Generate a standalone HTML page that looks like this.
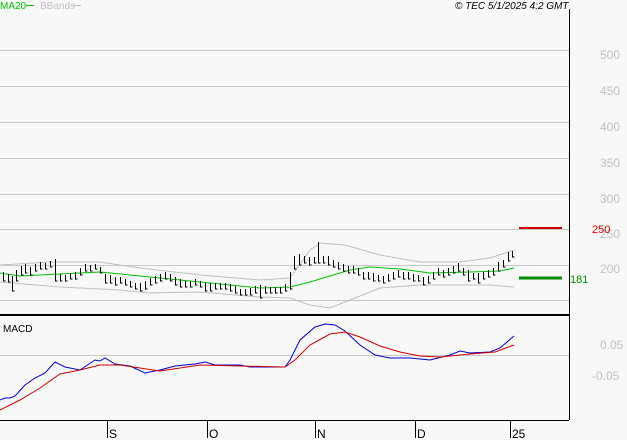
<!DOCTYPE html><html><head><style>body{margin:0;background:#f8f8f8}svg{display:block}text{font-family:"Liberation Sans",sans-serif}</style></head><body>
<svg width="627" height="440" xmlns="http://www.w3.org/2000/svg" shape-rendering="crispEdges">
<rect width="627" height="440" fill="#f8f8f8"/>
<g stroke="#c8c8c8" stroke-width="1">
<path d="M0 50.5H569M0 86.5H569M0 122.5H569M0 158.5H569M0 194.5H569M0 229.5H569M0 265.5H569M0 300.5H569M0 355.5H569"/>
</g>
<g fill="#c0c0c0" font-size="12">
<text x="600" y="59">500</text><text x="600" y="95">450</text><text x="600" y="131">400</text><text x="600" y="167">350</text><text x="600" y="203">300</text><text x="600" y="238">250</text><text x="600" y="273">200</text><text x="600" y="349">0.05</text><text x="592" y="380">-0.05</text>
</g>
<path d="M569.5 9V420M0 420.5H569" stroke="#000" stroke-width="1" fill="none"/>
<path d="M0 315H569" stroke="#000" stroke-width="2"/>
<path d="M107.5 420V438M207.5 420V438M315.5 420V438M415.5 420V438M510.5 420V438" stroke="#000"/>
<g font-size="12" fill="#000"><text x="109" y="438">S</text><text x="209" y="438">O</text><text x="317" y="438">N</text><text x="417" y="438">D</text><text x="512" y="438">25</text></g>
<text x="0" y="9" font-size="10" fill="#00c000">MA20</text><path d="M26 5.5H34" stroke="#00c000"/>
<text x="40" y="9" font-size="10" fill="#c0c0c0">BBands</text><path d="M73 5.5H81" stroke="#c0c0c0"/>
<text x="455" y="9" font-size="10" font-style="italic" fill="#000">© TEC 5/1/2025 4:2 GMT</text>
<text x="3" y="332" font-size="10" fill="#000">MACD</text>
<g shape-rendering="auto">
<polyline fill="none" stroke="#c0c0c0" points="0,265 50,262 100,262 140,268 200,275 260,280 290,278 310,250 320,243 345,245 380,255 420,262 460,262 490,258 514,250"/>
<polyline fill="none" stroke="#c0c0c0" points="0,282 60,287 120,290 150,293 200,292 260,297 290,298 310,305 330,308 350,300 380,288 420,285 460,285 490,285 514,287"/>
<polyline fill="none" stroke="#00c000" points="0,273 20,276 60,274 100,272 140,276 180,280 220,284 260,288 290,287 310,282 330,276 350,270 370,267 400,269 430,273 470,272 500,271 514,268"/>
</g>
<path stroke="#000" fill="none" d="M3.5 272V281h2M8.5 274V282h2M12.5 276V291h2M16.5 270V281h2M21.5 266V275h2M25.5 264V273h2M30.5 267V275h2M35.5 264V271h2M40.5 262V269h2M45.5 263V269h2M50.5 261V267h2M55.5 259V281h2M60.5 274V281h2M65.5 275V281h2M70.5 273V279h2M75.5 272V279h2M80.5 268V275h2M85.5 264V271h2M90.5 265V271h2M95.5 264V269h2M100.5 267V273h2M105.5 274V283h2M110.5 275V283h2M115.5 277V285h2M120.5 277V283h2M125.5 279V285h2M130.5 281V287h2M135.5 283V289h2M140.5 283V291h2M145.5 281V289h2M150.5 278V285h2M155.5 276V283h2M160.5 274V281h2M165.5 272V279h2M170.5 274V281h2M175.5 277V285h2M180.5 279V287h2M185.5 281V287h2M190.5 281V287h2M195.5 279V285h2M200.5 281V287h2M205.5 283V291h2M210.5 283V291h2M215.5 283V289h2M220.5 283V289h2M225.5 283V289h2M230.5 284V291h2M235.5 286V293h2M240.5 289V295h2M245.5 289V295h2M250.5 288V295h2M255.5 286V293h2M260.5 285V298h2M265.5 286V293h2M270.5 287V293h2M275.5 287V293h2M280.5 287V293h2M285.5 284V291h2M290.5 272V289h2M294.5 256V269h2M299.5 254V265h2M304.5 256V263h2M309.5 257V265h2M314.5 257V263h2M318.5 242V263h2M323.5 256V263h2M328.5 256V265h2M333.5 260V267h2M338.5 262V269h2M343.5 264V271h2M348.5 266V273h2M353.5 266V273h2M358.5 268V275h2M363.5 272V279h2M368.5 272V279h2M373.5 273V281h2M378.5 275V281h2M383.5 276V283h2M388.5 274V281h2M393.5 272V279h2M398.5 270V277h2M403.5 272V279h2M408.5 272V279h2M413.5 274V281h2M418.5 275V281h2M423.5 277V285h2M428.5 276V283h2M433.5 272V279h2M438.5 268V275h2M443.5 270V277h2M448.5 268V275h2M453.5 266V273h2M458.5 263V271h2M463.5 268V275h2M468.5 270V281h2M473.5 273V279h2M478.5 273V283h2M483.5 272V279h2M488.5 270V277h2M493.5 268V275h2M498.5 262V271h2M503.5 260V267h2M508.5 252V261h2M512.5 251V257h2"/>
<g shape-rendering="auto">
<polyline fill="none" stroke="#0000d0" points="0,400 5,398 10,398 15,396 25,385 35,378 45,373 55,362 65,367 80,370 95,360 100,361 105,358 115,364 130,366 145,373 160,370 175,366 195,364 205,362 215,365 240,365 250,367 285,367 290,360 300,340 315,327 325,324 335,325 345,331 360,345 375,355 390,358 410,358 430,360 450,355 460,351 470,353 490,352 500,348 514,336"/>
<polyline fill="none" stroke="#d00000" points="0,410 20,400 40,388 60,374 80,370 100,365 120,365 140,368 160,371 200,365 240,366 285,367 295,360 310,345 330,334 345,332 360,337 380,346 400,352 420,356 440,357 470,354 495,352 514,345"/>
</g>
<path d="M519 228H562" stroke="#d00000" stroke-width="2"/>
<path d="M519 278H562" stroke="#009000" stroke-width="3"/>
<text x="592" y="233" font-size="11" fill="#d00000">250</text>
<text x="570" y="283" font-size="11" fill="#009000">181</text>
</svg></body></html>
